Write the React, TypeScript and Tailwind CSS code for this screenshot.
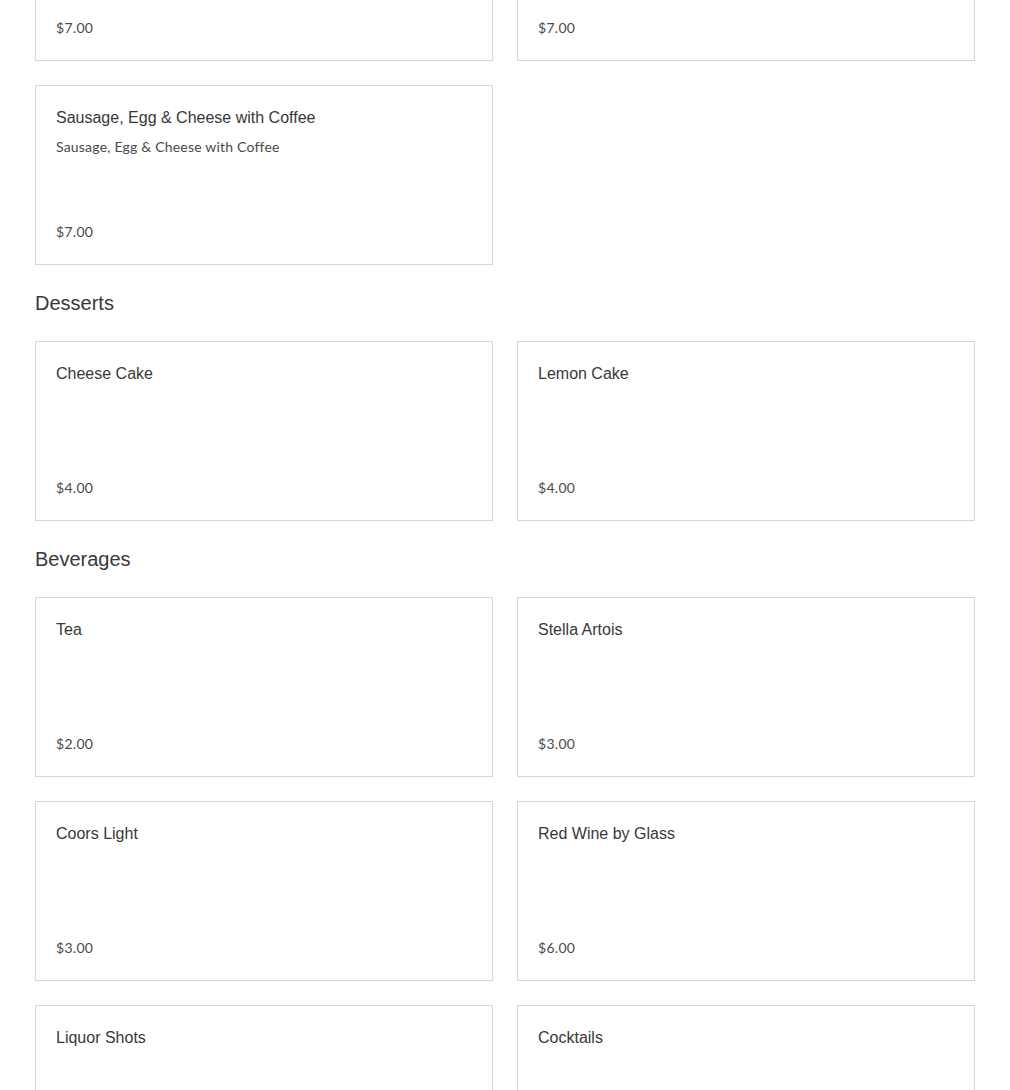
import React from 'react';

interface Item {
  name: string;
  description?: string;
  price: string;
}

interface Section {
  title?: string;
  items: Item[];
}

const sections: Section[] = [
  {
    items: [
      { name: 'Bacon, Egg & Cheese with Coffee', price: '$7.00' },
      { name: 'Ham, Egg & Cheese with Coffee', price: '$7.00' },
      {
        name: 'Sausage, Egg & Cheese with Coffee',
        description: 'Sausage, Egg & Cheese with Coffee',
        price: '$7.00',
      },
    ],
  },
  {
    title: 'Desserts',
    items: [
      { name: 'Cheese Cake', price: '$4.00' },
      { name: 'Lemon Cake', price: '$4.00' },
    ],
  },
  {
    title: 'Beverages',
    items: [
      { name: 'Tea', price: '$2.00' },
      { name: 'Stella Artois', price: '$3.00' },
      { name: 'Coors Light', price: '$3.00' },
      { name: 'Red Wine by Glass', price: '$6.00' },
      { name: 'Liquor Shots', price: '$5.00' },
      { name: 'Cocktails', price: '$8.00' },
    ],
  },
];

function MenuCard({ item }: { item: Item }) {
  return (
    <div className="flex h-[180px] flex-col justify-between border border-[#d6d6d6] bg-white px-5 py-5">
      <div>
        <h3 className="font-['Liberation_Sans',Arial,sans-serif] text-[16px] leading-6 text-[#383838]">
          {item.name}
        </h3>
        {item.description && (
          <p className="mt-[7px] font-['Lato',sans-serif] text-[14px] leading-5 tracking-[0.2px] text-[#4a4a4a]">
            {item.description}
          </p>
        )}
      </div>
      <p className="font-['Lato',sans-serif] text-[14px] leading-6 tracking-[0.3px] text-[#4a4a4a]">{item.price}</p>
    </div>
  );
}

export default function App() {
  return (
    <div className="h-[1090px] overflow-hidden bg-white">
      <div className="-mt-[119px] px-[35px]">
        {sections.map((section, i) => (
          <div key={i}>
            {section.title && (
              <h2 className="mt-6 mb-6 font-['Liberation_Sans',Arial,sans-serif] text-[20px] leading-7 text-[#383838]">
                {section.title}
              </h2>
            )}
            <div className="grid grid-cols-2 gap-6">
              {section.items.map((item) => (
                <MenuCard key={item.name} item={item} />
              ))}
            </div>
          </div>
        ))}
      </div>
    </div>
  );
}
